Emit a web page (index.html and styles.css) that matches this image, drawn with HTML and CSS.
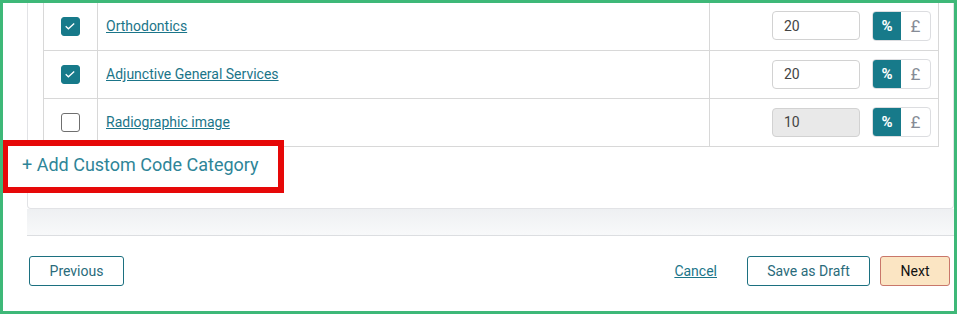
FILE: index.html
```
<!DOCTYPE html>
<html lang="en">
<head>
    <meta charset="UTF-8">
    <meta name="viewport" content="width=device-width, initial-scale=1.0">
    <title>Discount Categories</title>
    <link rel="stylesheet" href="styles.css">
</head>
<body>
    <section class="card">
        <table class="codes">
            <tr>
                <td class="col-check"><span class="check is-on"><svg viewBox="0 0 16 16"><path d="M3.7 8.3l2.7 2.5 5.8-5.4"/></svg></span></td>
                <td class="col-name"><a href="#">Orthodontics</a></td>
                <td class="col-value">
                    <div class="value-field">
                        <input type="text" value="20">
                        <div class="unit-toggle"><span class="unit on">%</span><span class="unit">£</span></div>
                    </div>
                </td>
            </tr>
            <tr>
                <td class="col-check"><span class="check is-on"><svg viewBox="0 0 16 16"><path d="M3.7 8.3l2.7 2.5 5.8-5.4"/></svg></span></td>
                <td class="col-name"><a href="#">Adjunctive General Services</a></td>
                <td class="col-value">
                    <div class="value-field">
                        <input type="text" value="20">
                        <div class="unit-toggle"><span class="unit on">%</span><span class="unit">£</span></div>
                    </div>
                </td>
            </tr>
            <tr>
                <td class="col-check"><span class="check"></span></td>
                <td class="col-name"><a href="#">Radiographic image</a></td>
                <td class="col-value">
                    <div class="value-field">
                        <input type="text" value="10" disabled>
                        <div class="unit-toggle"><span class="unit on">%</span><span class="unit">£</span></div>
                    </div>
                </td>
            </tr>
        </table>
    </section>

    <div class="card-foot"></div>

    <footer class="actions">
        <button class="btn btn-outline btn-prev">Previous</button>
        <div class="actions-right">
            <a href="#" class="cancel">Cancel</a>
            <button class="btn btn-outline btn-draft">Save as Draft</button>
            <button class="btn btn-next">Next</button>
        </div>
    </footer>

    <!-- annotation over the add link -->
    <div class="highlight">
        <a href="#" class="add-link">+ Add Custom Code Category</a>
    </div>
</body>
</html>
```

FILE: styles.css
```
* {
    box-sizing: border-box;
}
html, body {
    height: 100%;
}
body {
    margin: 0;
    border: 3px solid #3eb878;
    font-family: Roboto, "Liberation Sans", Arial, sans-serif;
    font-size: 14px;
    color: #333;
    background: #fff;
    overflow: hidden;
    position: relative;
}
.card {
    margin-left: 24px;
    border: 1px solid #e2e3e6;
    border-top: none;
    border-radius: 0 0 4px 4px;
    padding: 0 14px 61px 15px;
    background: #fff;
}
.codes {
    width: 100%;
    margin-top: -1px;
    border-collapse: collapse;
    border-left: 1px solid #d8d8d8;
    border-right: 1px solid #d8d8d8;
}
.codes td {
    height: 48px;
    border-bottom: 1px solid #d8d8d8;
    padding: 0;
    vertical-align: middle;
}
.col-check {
    width: 54px;
    text-align: center;
    border-right: 1px solid #d8d8d8;
}
.col-name {
    padding-left: 8px !important;
    border-right: 1px solid #d8d8d8;
}
.col-name a {
    color: #1b7589;
    text-decoration: underline;
}
.col-value {
    width: 229px;
}
.check {
    display: inline-block;
    width: 19px;
    height: 19px;
    border: 1.5px solid #6f6f6f;
    border-radius: 3px;
    vertical-align: middle;
    margin-top: 1px;
}
.check.is-on {
    background: #177a8a;
    border-color: #177a8a;
}
.check svg {
    display: block;
    width: 16px;
    height: 16px;
    fill: none;
    stroke: #fff;
    stroke-width: 1.3;
}
.value-field {
    display: flex;
    justify-content: flex-end;
    align-items: center;
    gap: 12px;
    padding-right: 7px;
}
.value-field input {
    width: 88px;
    height: 29px;
    border: 1px solid #d2d2d2;
    border-radius: 4px;
    padding: 0 11px;
    font-family: Roboto, "Liberation Sans", Arial, sans-serif;
    font-size: 14px;
    color: #444;
    background: #fff;
}
.value-field input:disabled {
    background: #e9e9e9;
    color: #444;
}
.unit-toggle {
    display: flex;
    height: 30px;
    border: 1px solid #dcdde0;
    border-radius: 4px;
    overflow: hidden;
}
.unit {
    width: 29px;
    display: flex;
    align-items: center;
    justify-content: center;
    font-size: 17px;
    color: #868c96;
}
.unit.on {
    width: 28px;
    background: #177a8a;
    color: #fff;
    font-size: 15px;
    font-weight: bold;
}
.card-foot {
    margin-left: 24px;
    height: 27px;
    background: linear-gradient(#eef0f2, #f8f9fa);
    border-bottom: 1px solid #dcdee1;
}
.actions {
    display: flex;
    align-items: center;
    padding: 20px 4px 0 26px;
}
.actions-right {
    margin-left: auto;
    display: flex;
    align-items: center;
}
.btn {
    height: 30px;
    border-radius: 3px;
    font-family: Roboto, "Liberation Sans", Arial, sans-serif;
    font-size: 14px;
    cursor: pointer;
    padding: 0;
}
.btn-outline {
    background: #fff;
    border: 1px solid #1c7080;
    color: #2a6b7b;
}
.btn-prev {
    width: 95px;
}
.btn-draft {
    width: 123px;
    margin-left: 30px;
}
.btn-next {
    width: 70px;
    margin-left: 10px;
    background: #fbe5c3;
    border: 1px solid #c9776a;
    color: #111;
}
.cancel {
    color: #1b7589;
    text-decoration: underline;
}
.highlight {
    position: absolute;
    left: -1px;
    top: 137px;
    width: 282px;
    height: 53px;
    border: 6px solid #e60808;
    background: #fff;
    padding: 7px 0 0 14px;
}
.add-link {
    font-size: 18px;
    line-height: 24px;
    color: #2e8598;
    text-decoration: none;
}
```
